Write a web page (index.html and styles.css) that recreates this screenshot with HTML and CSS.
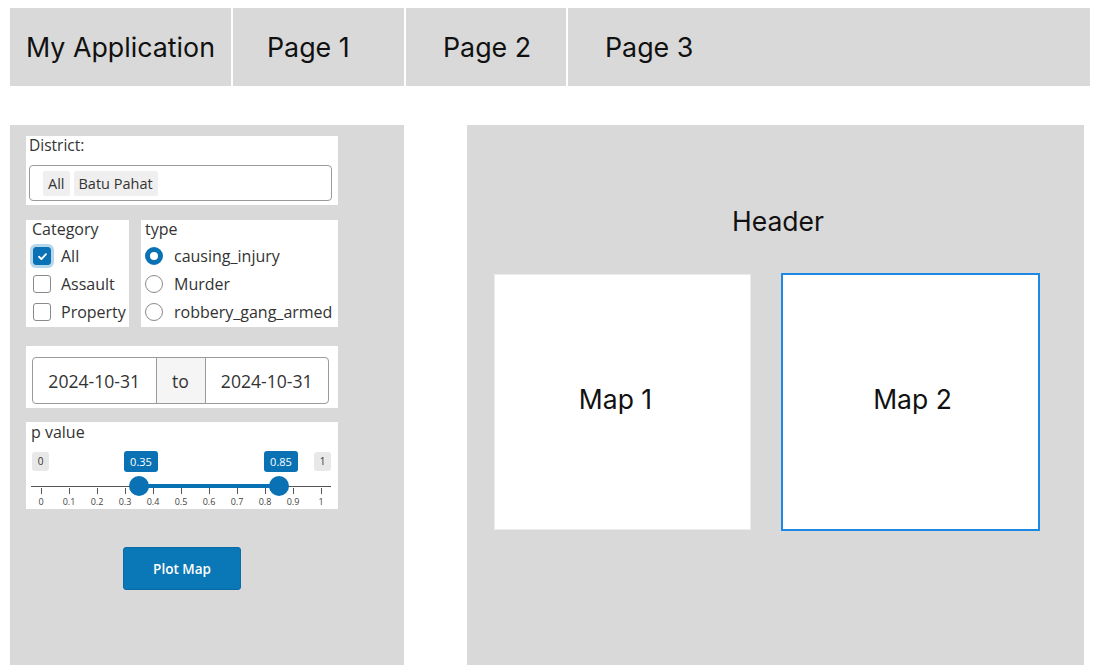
FILE: index.html
```html
<!DOCTYPE html>
<html>
<head>
<meta charset="utf-8">
<link rel="stylesheet" href="styles.css">
</head>
<body>
<div class="page">
  <nav class="nav">
    <div class="nav-cell brand">My Application</div>
    <div class="nav-cell p1">Page 1</div>
    <div class="nav-cell p2">Page 2</div>
    <div class="nav-cell p3">Page 3</div>
  </nav>
  <main class="main">
    <aside class="sidebar">
      <div class="widget district">
        <div class="w-label">District:</div>
        <div class="select">
          <span class="tag">All</span>
          <span class="tag">Batu Pahat</span>
        </div>
      </div>
      <div class="row">
        <div class="widget category">
          <div class="w-label">Category</div>
          <div class="opt"><span class="cbox checked"><svg viewBox="0 0 12 12" width="11" height="11"><path d="M2.2 6.3 L4.8 8.8 L9.8 3.4" fill="none" stroke="#fff" stroke-width="2" stroke-linecap="round" stroke-linejoin="round"/></svg></span>All</div>
          <div class="opt"><span class="cbox"></span>Assault</div>
          <div class="opt"><span class="cbox"></span>Property</div>
        </div>
        <div class="widget type">
          <div class="w-label">type</div>
          <div class="opt"><span class="radio checked"></span>causing_injury</div>
          <div class="opt"><span class="radio"></span>Murder</div>
          <div class="opt"><span class="radio"></span>robbery_gang_armed</div>
        </div>
      </div>
      <div class="widget dates">
        <div class="date-group">
          <div class="date-field">2024-10-31</div>
          <div class="date-to">to</div>
          <div class="date-field">2024-10-31</div>
        </div>
      </div>
      <div class="widget pvalue">
        <div class="w-label">p value</div>
        <div class="slider">
          <span class="bound min">0</span>
          <span class="bound max">1</span>
          <span class="tip" style="left:115px">0.35</span>
          <span class="tip" style="left:255px">0.85</span>
          <div class="track"></div>
          <div class="range" style="left:115px;width:140px"></div>
          <span class="thumb" style="left:103px"></span>
          <span class="thumb" style="left:243px"></span>
          <div class="ticks">
            <span class="tick">0</span><span class="tick">0.1</span><span class="tick">0.2</span><span class="tick">0.3</span><span class="tick">0.4</span><span class="tick">0.5</span><span class="tick">0.6</span><span class="tick">0.7</span><span class="tick">0.8</span><span class="tick">0.9</span><span class="tick">1</span>
          </div>
        </div>
      </div>
      <div class="btn-row"><button class="btn">Plot Map</button></div>
    </aside>
    <section class="content">
      <h2 class="header">Header</h2>
      <div class="maps">
        <div class="map">Map 1</div>
        <div class="map active">Map 2</div>
      </div>
    </section>
  </main>
</div>
</body>
</html>
```
FILE: styles.css
```css
* { box-sizing: border-box; }
html, body { margin: 0; padding: 0; background: #fff; }
.page { padding: 8px 3px 0 10px; font-family: Inter, "Liberation Sans", sans-serif; color: #111; }

.nav { display: flex; gap: 2px; height: 78px; }
.nav-cell { background: #d9d9d9; display: flex; align-items: center; font-size: 26.8px; color: #111; }
.brand { width: 221px; padding-left: 16px; }
.p1 { width: 171px; padding-left: 34px; }
.p2 { width: 160px; padding-left: 37px; }
.p3 { flex: 1; padding-left: 37px; }

.main { display: flex; gap: 63px; margin-top: 39px; }
.sidebar { width: 394px; height: 540px; background: #d9d9d9; padding: 12px 16px 0 16px; font-family: "Open Sans", "Liberation Sans", sans-serif; color: #333; }
.widget { background: #fff; width: 312px; }
.w-label { font-size: 15.5px; line-height: 18px; }

.district { height: 69px; padding: 0 6px 0 3px; }
.district .w-label { padding-top: 0; margin-top: -1px; }
.select { margin-top: 11px; height: 36px; border: 1px solid #9a9a9a; border-radius: 4px; display: flex; align-items: center; gap: 4px; padding-left: 13px; }
.tag { background: #efefef; font-size: 14.5px; line-height: 25px; padding: 0 5px; border-radius: 2px; }

.row { display: flex; gap: 12px; margin-top: 15px; }
.category { width: 103px; height: 107px; padding-left: 6px; }
.type { width: 197px; height: 107px; padding-left: 4px; }
.category .w-label, .type .w-label { font-size: 16px; margin-bottom: 4px; }
.opt { display: flex; align-items: center; height: 28px; font-size: 16px; }
.cbox { width: 18px; height: 18px; border: 1px solid #8a8a8a; border-radius: 3px; margin: 0 10px 0 1px; display: inline-flex; align-items: center; justify-content: center; background: #fff; flex: none; }
.cbox.checked { background: #0a72b4; border-color: #0a72b4; box-shadow: 0 0 0 3px #b6d6ec; }
.radio { width: 18px; height: 18px; border: 1px solid #8a8a8a; border-radius: 50%; margin-right: 11px; flex: none; }
.radio.checked { border: 5px solid #0a72b4; }

.dates { margin-top: 19px; height: 62px; padding: 11px 9px 0 6px; }
.date-group { display: flex; height: 47px; border: 1px solid #9a9a9a; border-radius: 4px; overflow: hidden; }
.date-field { flex: 1; display: flex; align-items: center; justify-content: center; font-size: 17.6px; color: #333; }
.date-to { width: 50px; background: #f5f5f5; border-left: 1px solid #9a9a9a; border-right: 1px solid #9a9a9a; display: flex; align-items: center; justify-content: center; font-size: 17.6px; }

.pvalue { margin-top: 14px; height: 87px; padding-left: 5px; }
.pvalue .w-label { font-size: 16px; line-height: 20px; }
.slider { position: relative; height: 67px; margin-left: -5px; }
.bound { position: absolute; top: 10px; height: 19px; min-width: 17px; background: #e8e8e8; border-radius: 3px; font-size: 10px; line-height: 19px; text-align: center; color: #333; }
.bound.min { left: 6px; }
.bound.max { left: 288px; }
.tip { position: absolute; top: 9px; width: 34px; margin-left: -17px; height: 21px; background: #0a72b4; color: #fff; font-size: 11px; line-height: 21px; text-align: center; border-radius: 3px; }
.track { position: absolute; left: 5px; width: 300px; top: 44px; height: 1px; background: #555; }
.range { position: absolute; top: 43px; height: 4px; background: #0a72b4; margin-top: -1px; }
.thumb { position: absolute; top: 34px; width: 20px; height: 20px; border-radius: 50%; background: #0a72b4; }
.ticks { position: absolute; left: 1px; top: 46px; display: flex; }
.tick { width: 28px; text-align: center; font-size: 9px; color: #444; padding-top: 8px; position: relative; line-height: 12px; }
.tick::before { content: ""; position: absolute; left: 13.5px; top: 0; width: 1px; height: 6px; background: #555; }

.btn-row { width: 312px; display: flex; justify-content: center; margin-top: 38px; }
.btn { width: 118px; height: 43px; background: #0a77b6; color: #fff; border: 1px solid #0a6aa5; border-radius: 3px; font-family: "Open Sans", "Liberation Sans", sans-serif; font-size: 13.5px; font-weight: 600; }

.content { width: 617px; height: 540px; background: #d9d9d9; padding: 80px 0 0 27px; }
.header { margin: 0; font-weight: 400; font-size: 26.5px; line-height: 32px; text-align: center; padding-right: 22px; color: #111; }
.maps { display: flex; gap: 30px; margin-top: 37px; }
.map { width: 257px; height: 256px; background: #fff; border: 1px solid #ececec; display: flex; align-items: center; justify-content: center; font-size: 26.5px; color: #111; padding-bottom: 6px; }
.map:first-child { padding-right: 14px; }
.map.active { width: 259px; height: 258px; margin-top: -1px; border: 2px solid #1e88e5; padding-left: 4px; }
```
